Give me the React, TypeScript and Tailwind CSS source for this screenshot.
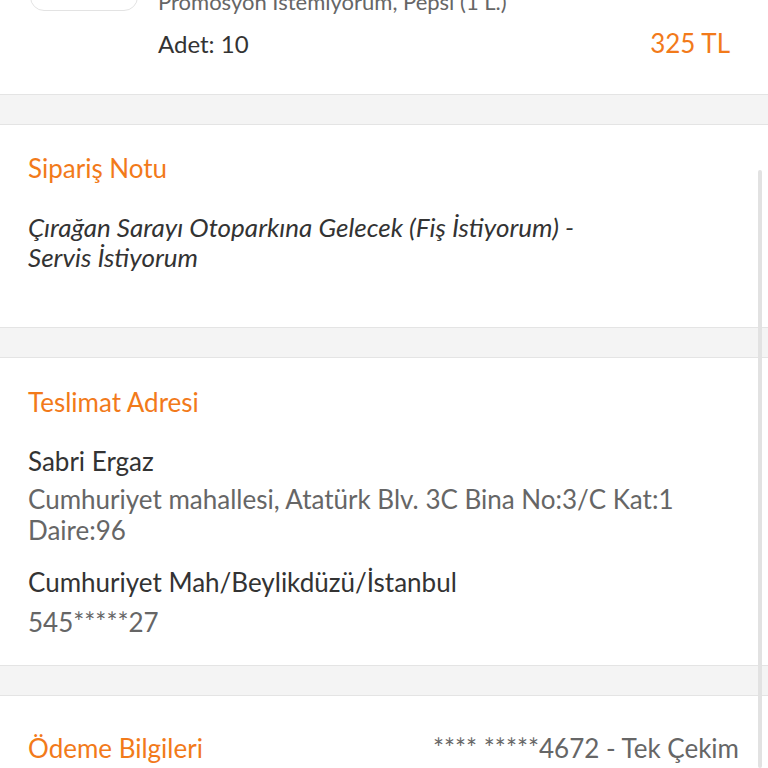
const Band = () => (
  <div className="h-[31px] border-y border-[#e4e4e4] bg-[#f4f4f4]" />
);

export default function App() {
  return (
    <div className="relative h-[768px] overflow-hidden bg-white font-['Lato',sans-serif] text-[#333]">
      {/* product row, scrolled past the top */}
      <section className="h-[94px] overflow-hidden">
        <div className="flex pl-[30px] pr-[38px]">
          <div className="-mt-[89px] h-[100px] w-[108px] shrink-0 rounded-[14px] border border-[#e3e3e3]" />
          <div className="-mt-[12px] ml-5 flex-1">
            <p className="text-[22px] leading-[28px] text-[#666]">
              Promosyon İstemiyorum, Pepsi (1 L.)
            </p>
            <div className="mt-[12px] flex items-baseline justify-between leading-[30px]">
              <span className="text-[24px]">Adet: 10</span>
              <span className="text-[26px] text-[#f27a1a]">325 TL</span>
            </div>
          </div>
        </div>
      </section>

      <Band />

      <section className="h-[202px] px-[28px] pt-[28px] text-[26px]">
        <h2 className="leading-[30px] text-[#f27a1a]">Sipariş Notu</h2>
        <p className="mt-[29px] leading-[30px] italic">
          Çırağan Sarayı Otoparkına Gelecek (Fiş İstiyorum) -
          <br />
          Servis İstiyorum
        </p>
      </section>

      <Band />

      <section className="h-[307px] px-[28px] pt-[29px] text-[26px]">
        <h2 className="leading-[30px] text-[#f27a1a]">Teslimat Adresi</h2>
        <p className="mt-[29px] leading-[30px]">Sabri Ergaz</p>
        <p className="mt-[8px] leading-[31px] text-[#666]">
          Cumhuriyet mahallesi, Atatürk Blv. 3C Bina No:3/C Kat:1 Daire:96
        </p>
        <p className="mt-[21px] leading-[30px]">Cumhuriyet Mah/Beylikdüzü/İstanbul</p>
        <p className="mt-[10px] leading-[30px] text-[#666]">545*****27</p>
      </section>

      <Band />

      <section className="flex items-start justify-between pl-[28px] pr-[29px] pt-[37px] text-[26px] leading-[30px]">
        <h2 className="text-[#f27a1a]">Ödeme Bilgileri</h2>
        <span className="text-[#666]">**** *****4672 - Tek Çekim</span>
      </section>

      {/* scrollbar overlay */}
      <div className="absolute bottom-0 right-[6px] top-[170px] w-[4px] rounded-full bg-[#e2e2e2]" />
    </div>
  );
}
